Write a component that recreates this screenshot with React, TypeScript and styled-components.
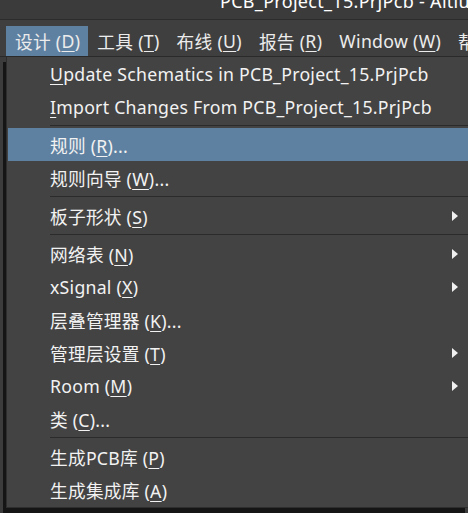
import React from "react";
import styled, { createGlobalStyle } from "styled-components";

const GlobalStyle = createGlobalStyle`
  html, body {
    margin: 0;
    padding: 0;
    background: #161616;
    overflow: hidden;
  }
  body {
    font-family: "Noto Sans", "Noto Sans CJK SC", sans-serif;
    color: #f2f2f2;
  }
`;

const Frame = styled.div`
  width: 468px;
  height: 513px;
  display: flex;
  flex-direction: column;
  overflow: hidden;
  background: #3c3c3c;
`;

const TitleBar = styled.div`
  height: 19px;
  flex: none;
  background: #3b3b3b;
  border-bottom: 1px solid #2c2c2c;
  overflow: hidden;
  padding-left: 220px;
  white-space: nowrap;
`;

const TitleText = styled.span`
  display: block;
  font-size: 18px;
  line-height: 18px;
  margin-top: -8px;
  letter-spacing: 0.3px;
  color: #ffffff;
`;

const MenuBar = styled.div`
  height: 37px;
  flex: none;
  background: #3f3f3f;
  border-bottom: 1px solid #2a2a2a;
  box-sizing: border-box;
  padding: 6px 0 0 6px;
  display: flex;
  align-items: flex-start;
  white-space: nowrap;
  overflow: hidden;
`;

const MenuTitle = styled.div<{ $open?: boolean }>`
  height: 30px;
  padding: 0 8px 0 9px;
  flex: none;
  display: flex;
  align-items: center;
  font-size: 17.7px;
  letter-spacing: 0.3px;
  color: #ececec;
  background: ${(p) => (p.$open ? "#5f81a1" : "transparent")};
`;

const Body = styled.div`
  flex: 1;
  display: flex;
  padding-left: 6px;
  min-height: 0;
`;

const Dropdown = styled.div`
  flex: 1;
  height: 451px;
  box-sizing: border-box;
  background: #434343;
  border-left: 1px solid #2e2e2e;
  border-bottom: 1px solid #2e2e2e;
  box-shadow: -3px 5px 0 #151515;
  padding-left: 1px;
  display: flex;
  flex-direction: column;
`;

const Item = styled.div<{ $active?: boolean }>`
  height: 33px;
  flex: none;
  display: flex;
  align-items: center;
  padding: 0 10px 0 42px;
  font-size: 17.7px;
  letter-spacing: 0.25px;
  white-space: nowrap;
  color: #f2f2f2;
  background: ${(p) => (p.$active ? "#5f81a1" : "transparent")};
`;

const Label = styled.span`
  flex: 1;
`;

const Key = styled.span`
  text-decoration: underline;
  text-underline-offset: 3px;
  text-decoration-thickness: 1px;
`;

const Arrow = styled.span`
  width: 0;
  height: 0;
  border-top: 5px solid transparent;
  border-bottom: 5px solid transparent;
  border-left: 6px solid #f0f0f0;
`;

const Separator = styled.div`
  height: 5px;
  flex: none;
  display: flex;
  align-items: center;
  padding-left: 42px;
  &::after {
    content: "";
    flex: 1;
    height: 1px;
    background: #2b2b2b;
  }
`;

type Entry =
  | { sep: true }
  | { pre: string; key: string; post?: string; sub?: boolean; active?: boolean };

const entries: Entry[] = [
  { pre: "", key: "U", post: "pdate Schematics in PCB_Project_15.PrjPcb" },
  { pre: "", key: "I", post: "mport Changes From PCB_Project_15.PrjPcb" },
  { sep: true },
  { pre: "规则 (", key: "R", post: ")...", active: true },
  { pre: "规则向导 (", key: "W", post: ")..." },
  { sep: true },
  { pre: "板子形状 (", key: "S", post: ")", sub: true },
  { sep: true },
  { pre: "网络表 (", key: "N", post: ")", sub: true },
  { pre: "xSignal (", key: "X", post: ")", sub: true },
  { pre: "层叠管理器 (", key: "K", post: ")..." },
  { pre: "管理层设置 (", key: "T", post: ")", sub: true },
  { pre: "Room (", key: "M", post: ")", sub: true },
  { pre: "类 (", key: "C", post: ")..." },
  { sep: true },
  { pre: "生成PCB库 (", key: "P", post: ")" },
  { pre: "生成集成库 (", key: "A", post: ")" },
];

const menus = [
  { pre: "设计 (", key: "D", open: true },
  { pre: "工具 (", key: "T" },
  { pre: "布线 (", key: "U" },
  { pre: "报告 (", key: "R" },
  { pre: "Window (", key: "W" },
  { pre: "帮助 (", key: "H" },
];

export default function App() {
  return (
    <Frame>
      <GlobalStyle />
      <TitleBar>
        <TitleText>PCB_Project_15.PrjPcb - Altium Designer</TitleText>
      </TitleBar>
      <MenuBar>
        {menus.map((m) => (
          <MenuTitle key={m.pre} $open={m.open}>
            {m.pre}
            <Key>{m.key}</Key>)
          </MenuTitle>
        ))}
      </MenuBar>
      <Body>
        <Dropdown>
          {entries.map((e, i) =>
            "sep" in e ? (
              <Separator key={i} />
            ) : (
              <Item key={i} $active={e.active}>
                <Label>
                  {e.pre}
                  <Key>{e.key}</Key>
                  {e.post}
                </Label>
                {e.sub && <Arrow />}
              </Item>
            )
          )}
        </Dropdown>
      </Body>
    </Frame>
  );
}
